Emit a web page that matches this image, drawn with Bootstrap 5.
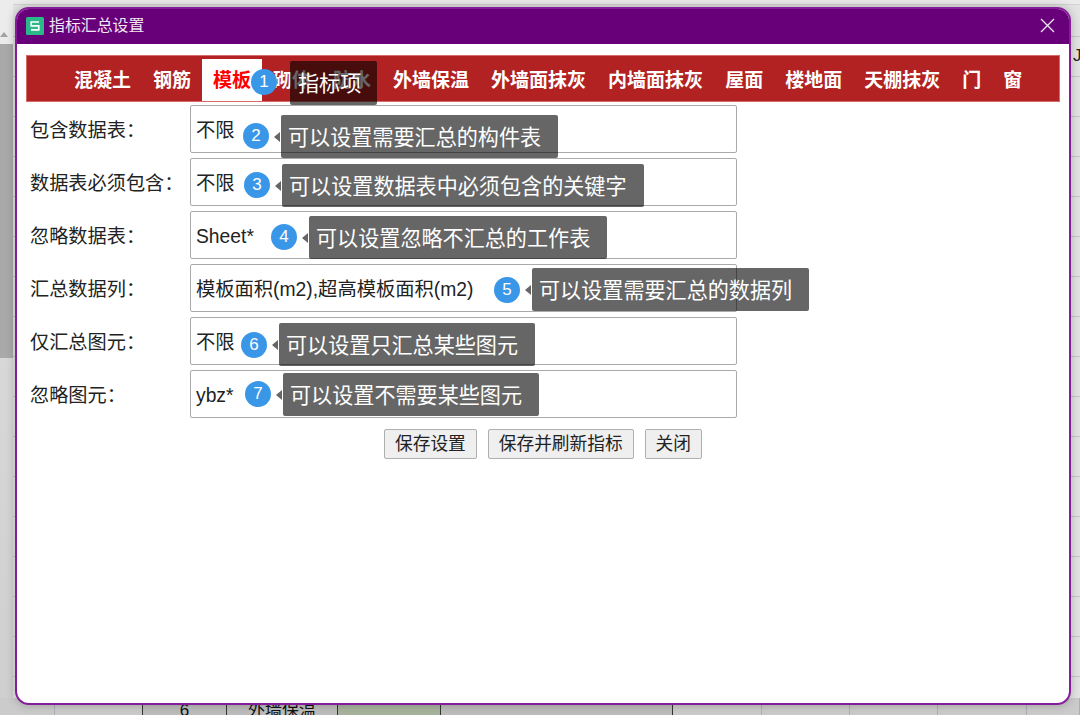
<!DOCTYPE html>
<html lang="zh-CN">
<head>
<meta charset="utf-8">
<title>指标汇总设置</title>
<link href="https://cdn.jsdelivr.net/npm/bootstrap@5.3.0/dist/css/bootstrap.min.css" rel="stylesheet">
<style>
html,body{height:715px;overflow:hidden;}
body{position:relative;background:#e2e2e2;font-family:"Liberation Sans","Noto Sans CJK SC",sans-serif;color:#222;}
/* dimmed spreadsheet behind the dialog */
.sheet{position:absolute;inset:0;overflow:hidden;background:repeating-linear-gradient(to bottom,#e3e3e3 0,#e3e3e3 39px,#c3c7cd 39px,#c3c7cd 40px);background-position:0 -3px;}
.sheet-top{position:absolute;left:0;right:0;top:0;height:5px;background:#ebebeb;border-bottom:1px solid #d2d2d2;}
.sheet-left{position:absolute;left:0;top:0;bottom:0;width:13px;background:linear-gradient(to bottom,#ececec 0,#ececec 44px,#a9a9a9 44px,#a9a9a9 358px,#d8d8d8 358px,#cfcfcf 100%);}
.sheet-caret{position:absolute;left:0;top:32px;width:0;height:0;border:4px solid transparent;border-top:0;border-bottom:5px solid #a3a3a3;}
.sheet-j{position:absolute;left:1073px;top:47px;font-size:17px;line-height:18px;color:#222;}
.sheet-row{position:absolute;left:0;top:698px;height:20px;width:1080px;display:grid;grid-template-columns:55px 88px 84px 111px 103px 232px 89px 88px 88px 89px 53px;background:#cbcbcb;}
.sheet-cell{border-right:1px solid #aab0b8;font-size:17px;line-height:23px;text-align:center;color:#111;}
.cell-dark{background:#bdbdbd;border-right-color:#333;border-top:1px solid #333;}
.cell-edge{border-right-color:#333;}
.cell-green{background:#a8b39e;}
/* dialog */
.dlg{position:relative;z-index:1;width:1056px;height:698px;margin:7px 0 0 15px;background:#fff;border:2px solid #851c9a;border-radius:14px;overflow:hidden;box-shadow:0 0 10px rgba(0,0,0,.25);}
.dlg-head{margin:-2px -2px 0;height:37px;background:#68007a;color:#f2e8f4;font-size:15.9px;padding:0 16px 0 11px;}
.dlg-logo{width:18px;height:18px;margin-right:5px;}
.dlg-x{width:15px;height:15px;}
.dlg-body{padding:11px 9px 0;}
.tabbar{height:47px;background:#b22222;border:1px solid #d96a6a;padding:3px 0 0 36px;flex-wrap:nowrap;}
.tabbar .nav-link{height:42px;padding:0 11px;font-size:19px;line-height:43px;font-weight:700;color:#fff;white-space:nowrap;border-radius:0;}
.tabbar .nav-link.active{background:#fff;color:#f00;}
.form-line{height:48px;margin-top:5px;}
.line-first{margin-top:3px;}
.line-label{width:164px;padding-left:4px;font-size:19.2px;line-height:52px;margin:0;color:#222;}
.line-field{position:relative;width:547px;height:48px;border:1px solid #aaa;border-radius:2px;padding:0 5px;font-size:19.3px;line-height:49px;color:#222;white-space:nowrap;}
.btn-row{margin-top:11px;}
.btn-gap{gap:11px;}
.btn-plain{height:30px;padding:0 10px;font-size:17.7px;line-height:28px;color:#222;background:#efefef;border:1px solid #b0b0b0;border-radius:2px;}
/* callouts */
.dot{position:absolute;z-index:3;width:26px;height:26px;border-radius:50%;background:#3a97e8;color:#fff;font-size:17px;line-height:26px;text-align:center;}
.tip{position:absolute;z-index:2;height:43px;padding:0 17px 0 7px;background:rgba(0,0,0,.6);color:#fff;font-size:21.1px;line-height:45px;border-radius:2px;white-space:nowrap;}
.tip::before{content:"";position:absolute;left:-7px;top:50%;margin-top:-5px;border:5px solid transparent;border-left:0;border-right:6px solid #666;}
.tab-tip{left:273px;top:52px;width:87px;height:44px;padding:0 0 0 8px;}
.tab-tip::before{display:none;}
.tab-dot{left:234px;top:60px;}
.n2 .dot{left:52px;top:17px;}.n2 .tip{left:90px;top:9px;}
.n3 .dot{left:53px;top:13px;}.n3 .tip{left:91px;top:5px;}
.n4 .dot{left:80px;top:12px;}.n4 .tip{left:118px;top:4px;}
.n5 .dot{left:303px;top:12px;}.n5 .tip{left:341px;top:3px;}
.n6 .dot{left:50px;top:14px;}.n6 .tip{left:88px;top:5px;}
.n7 .dot{left:54px;top:10px;}.n7 .tip{left:92px;top:2px;}
</style>
</head>
<body>
<div class="sheet">
  <div class="sheet-top"></div>
  <div class="sheet-left"></div>
  <div class="sheet-caret"></div>
  <div class="sheet-j">J</div>
  <div class="sheet-row">
    <div class="sheet-cell"></div>
    <div class="sheet-cell cell-edge"></div>
    <div class="sheet-cell cell-dark">6</div>
    <div class="sheet-cell cell-dark">外墙保温</div>
    <div class="sheet-cell cell-dark cell-green"></div>
    <div class="sheet-cell cell-dark"></div>
    <div class="sheet-cell"></div>
    <div class="sheet-cell"></div>
    <div class="sheet-cell"></div>
    <div class="sheet-cell"></div>
    <div class="sheet-cell"></div>
  </div>
</div>

<div class="dlg">
  <div class="dlg-head d-flex align-items-center">
    <svg class="dlg-logo flex-shrink-0" viewBox="0 0 18 18" aria-hidden="true">
      <rect width="18" height="18" rx="1.5" fill="#2bb98a"/>
      <path d="M13 5H5.2v3.9h7.6v4H5" fill="none" stroke="#fff" stroke-width="1.6"/>
    </svg>
    <span>指标汇总设置</span>
    <svg class="dlg-x ms-auto" viewBox="0 0 15 15" aria-hidden="true">
      <path d="M1 1l13 13M14 1L1 14" fill="none" stroke="#f2e8f4" stroke-width="1.3"/>
    </svg>
  </div>

  <div class="dlg-body">
    <ul class="nav tabbar">
      <li class="nav-item"><a class="nav-link" href="#">混凝土</a></li>
      <li class="nav-item"><a class="nav-link" href="#">钢筋</a></li>
      <li class="nav-item"><a class="nav-link active" href="#">模板</a></li>
      <li class="nav-item"><a class="nav-link" href="#">砌体</a></li>
      <li class="nav-item"><a class="nav-link" href="#">防水</a></li>
      <li class="nav-item"><a class="nav-link" href="#">外墙保温</a></li>
      <li class="nav-item"><a class="nav-link" href="#">外墙面抹灰</a></li>
      <li class="nav-item"><a class="nav-link" href="#">内墙面抹灰</a></li>
      <li class="nav-item"><a class="nav-link" href="#">屋面</a></li>
      <li class="nav-item"><a class="nav-link" href="#">楼地面</a></li>
      <li class="nav-item"><a class="nav-link" href="#">天棚抹灰</a></li>
      <li class="nav-item"><a class="nav-link" href="#">门</a></li>
      <li class="nav-item"><a class="nav-link" href="#">窗</a></li>
    </ul>

    <div class="form-line line-first d-flex">
      <label class="line-label">包含数据表：</label>
      <div class="line-field n2">不限<span class="dot">2</span><span class="tip">可以设置需要汇总的构件表</span></div>
    </div>
    <div class="form-line d-flex">
      <label class="line-label">数据表必须包含：</label>
      <div class="line-field n3">不限<span class="dot">3</span><span class="tip">可以设置数据表中必须包含的关键字</span></div>
    </div>
    <div class="form-line d-flex">
      <label class="line-label">忽略数据表：</label>
      <div class="line-field n4">Sheet*<span class="dot">4</span><span class="tip">可以设置忽略不汇总的工作表</span></div>
    </div>
    <div class="form-line d-flex">
      <label class="line-label">汇总数据列：</label>
      <div class="line-field n5">模板面积(m2),超高模板面积(m2)<span class="dot">5</span><span class="tip">可以设置需要汇总的数据列</span></div>
    </div>
    <div class="form-line d-flex">
      <label class="line-label">仅汇总图元：</label>
      <div class="line-field n6">不限<span class="dot">6</span><span class="tip">可以设置只汇总某些图元</span></div>
    </div>
    <div class="form-line d-flex">
      <label class="line-label">忽略图元：</label>
      <div class="line-field n7">ybz*<span class="dot">7</span><span class="tip">可以设置不需要某些图元</span></div>
    </div>

    <div class="btn-row btn-gap d-flex justify-content-center">
      <button class="btn btn-plain" type="button">保存设置</button>
      <button class="btn btn-plain" type="button">保存并刷新指标</button>
      <button class="btn btn-plain" type="button">关闭</button>
    </div>
  </div>

  <span class="dot tab-dot">1</span>
  <span class="tip tab-tip">指标项</span>
</div>
</body>
</html>
